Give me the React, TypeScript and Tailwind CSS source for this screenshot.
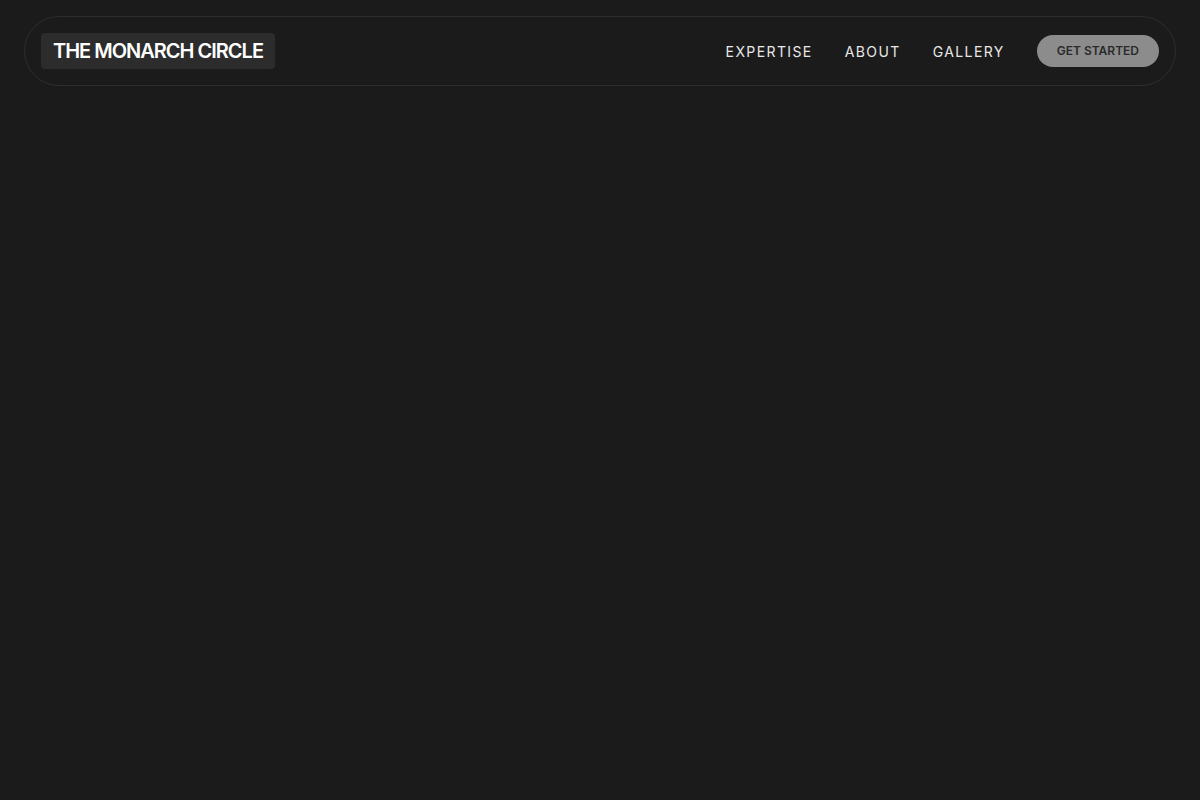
import React from 'react';

const links = ['EXPERTISE', 'ABOUT', 'GALLERY'];

export default function App() {
  return (
    <div
      className="min-h-screen w-full bg-[#1b1b1b] px-6 pt-4"
      style={{ fontFamily: 'Inter, "Noto Sans", sans-serif' }}
    >
      <nav className="flex items-center justify-between rounded-full border border-[#2e2e2e] px-4 py-4">
        <div className="flex h-9 items-center rounded bg-[#2c2c2c] px-3">
          <span className="text-[20px] font-semibold tracking-[-0.05em] text-white">THE MONARCH CIRCLE</span>
        </div>
        <div className="flex items-center gap-8">
          {links.map((l) => (
            <a key={l} href="#" className="text-[14px] tracking-[0.1em] text-[#e8e8e8]">
              {l}
            </a>
          ))}
          <button className="h-8 rounded-full bg-[#8c8c8c] px-5 text-[12px] font-semibold text-[#2a2a2a]">
            GET STARTED
          </button>
        </div>
      </nav>
    </div>
  );
}
